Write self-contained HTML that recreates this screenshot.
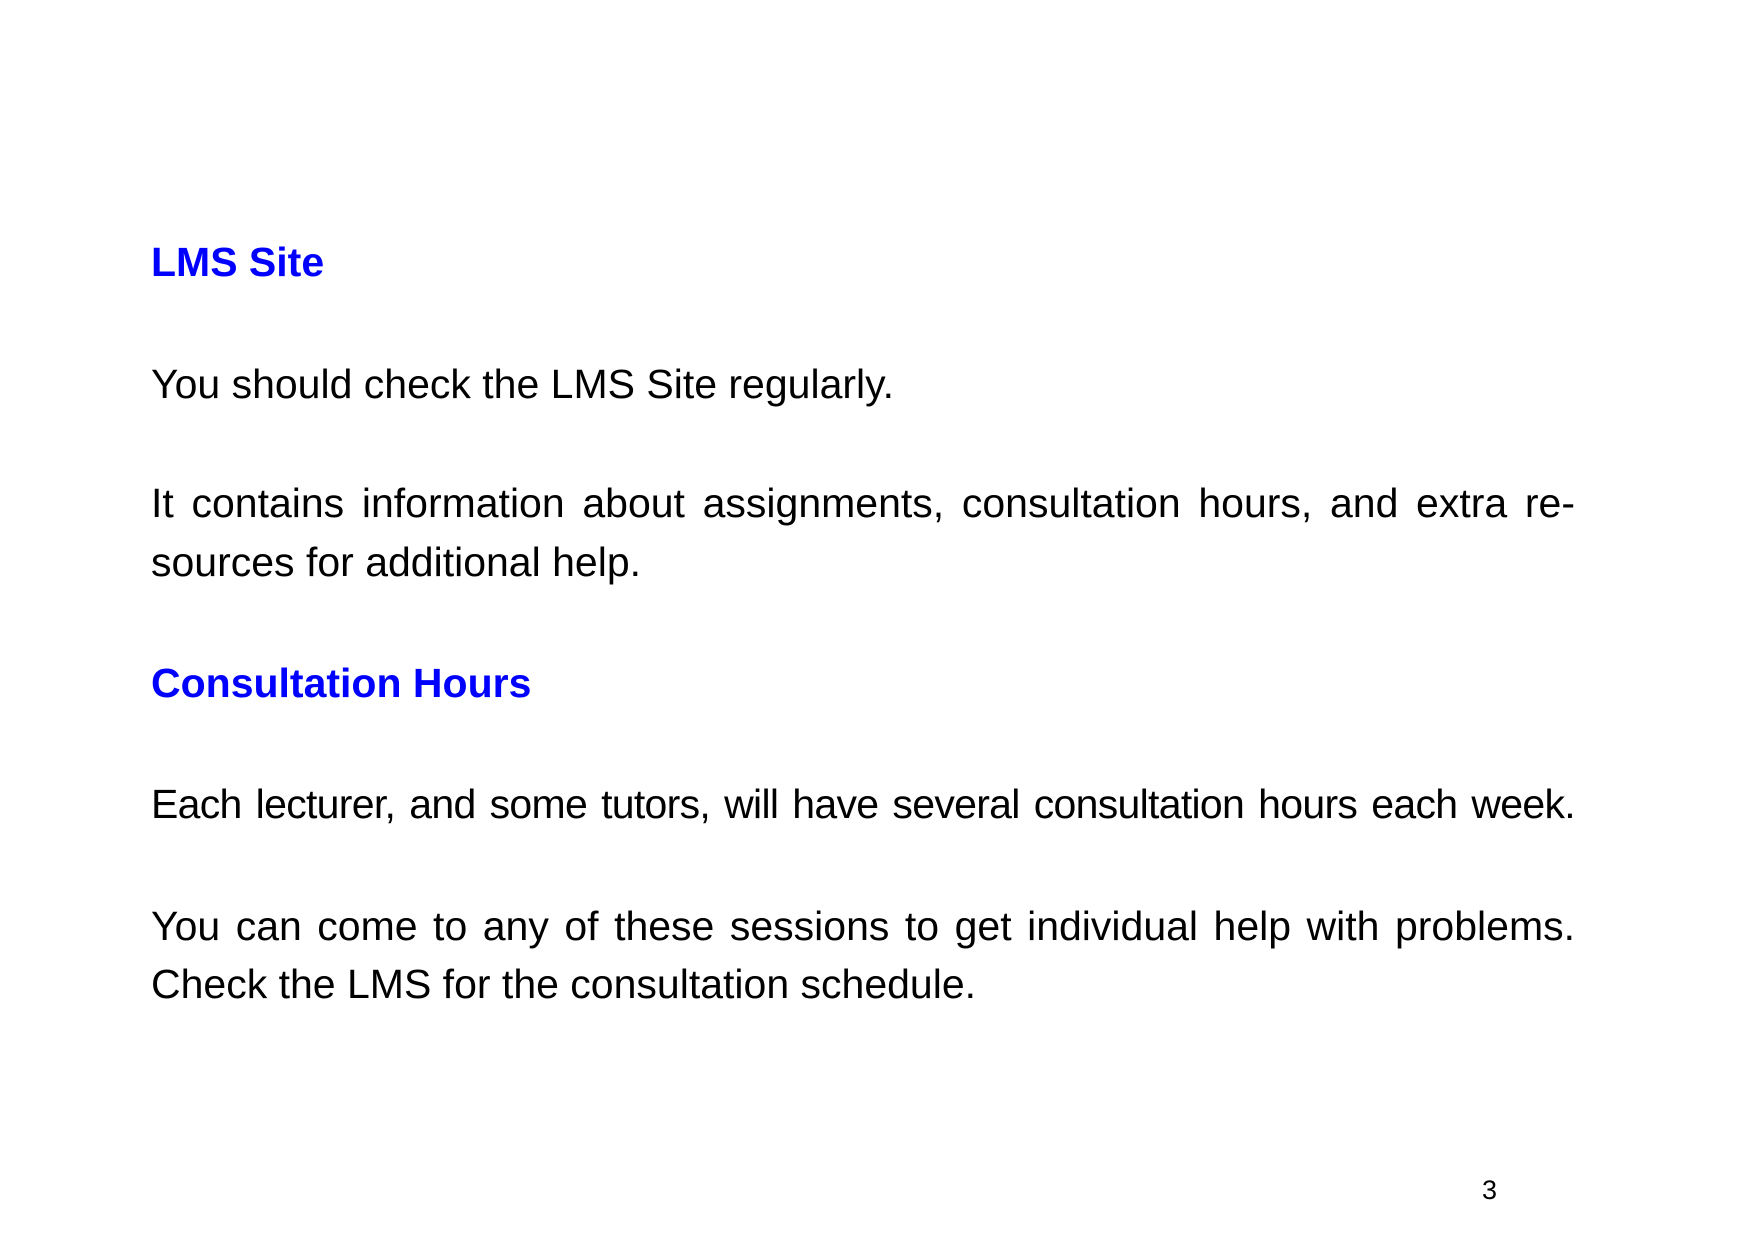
<!DOCTYPE html>
<html><head><meta charset="utf-8"><style>
html,body{margin:0;padding:0;background:#fff;}
body{width:1756px;height:1242px;position:relative;overflow:hidden;font-family:"Liberation Sans",sans-serif;color:#000;}
.l{position:absolute;left:151px;width:1424px;font-size:41px;line-height:59px;white-space:nowrap;}
.j{text-align:justify;text-align-last:justify;white-space:normal;}
.h{color:#0000ff;font-weight:bold;}
.pn{position:absolute;left:1482px;top:1175px;font-size:27px;line-height:30px;}
</style></head><body>
<div class="l h" style="top:233px">LMS Site</div>
<div class="l" style="top:355px">You should check the LMS Site regularly.</div>
<div class="l j" style="top:474px">It contains information about assignments, consultation hours, and extra re-</div>
<div class="l" style="top:533px">sources for additional help.</div>
<div class="l h" style="top:654px">Consultation Hours</div>
<div class="l j" style="top:775px;letter-spacing:-0.7px;word-spacing:-2px">Each lecturer, and some tutors, will have several consultation hours each week.</div>
<div class="l j" style="top:897px">You can come to any of these sessions to get individual help with problems.</div>
<div class="l" style="top:955px">Check the LMS for the consultation schedule.</div>
<div class="pn">3</div>
</body></html>
